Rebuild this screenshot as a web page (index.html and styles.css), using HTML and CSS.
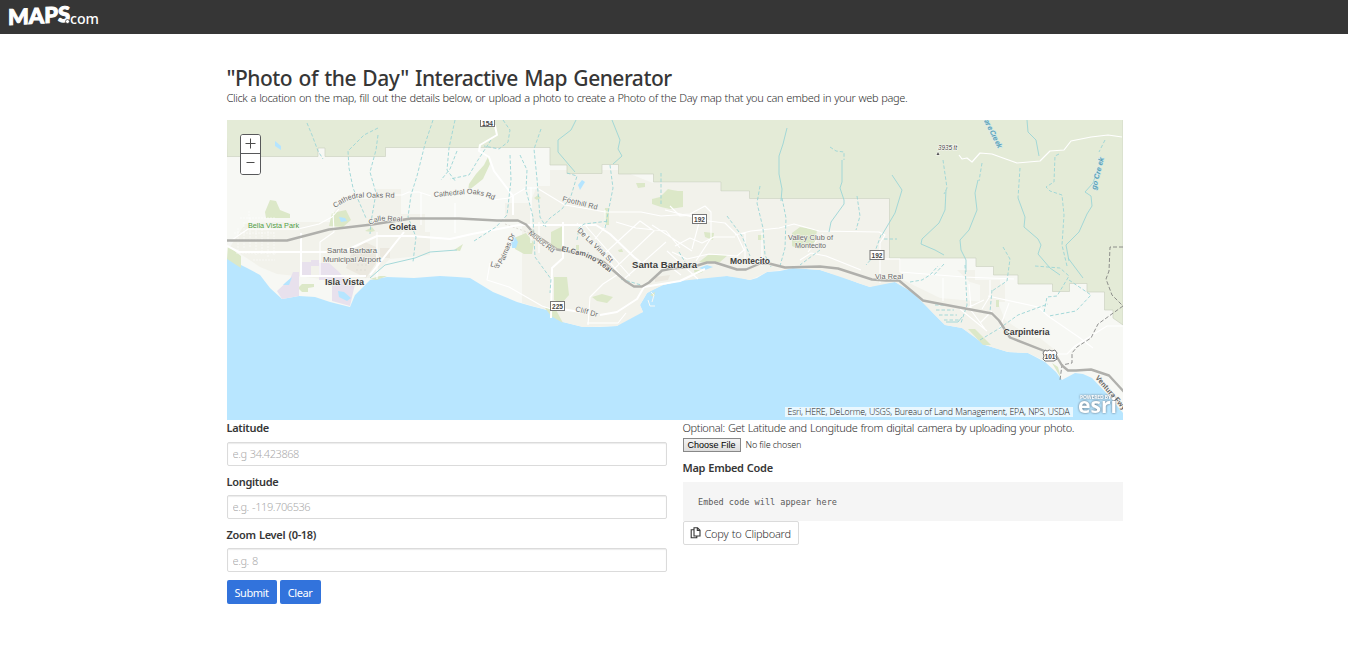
FILE: index.html
```
<!DOCTYPE html>
<html lang="en">
<head>
<meta charset="utf-8">
<title>Photo of the Day Map Generator</title>
<link rel="stylesheet" href="styles.css">
</head>
<body>
<header class="navbar">
  <svg class="logo" width="96" height="24" viewBox="0 0 96 24" aria-label="Maps.com">
    <g fill="#fff" transform="skewY(-3)">
      <text class="logo-main" x="0" y="21" textLength="62" lengthAdjust="spacingAndGlyphs">MAPS</text>
    </g>
    <text class="logo-com" x="62" y="19.5" textLength="29" lengthAdjust="spacingAndGlyphs">com</text>
    <circle cx="59.500" cy="17.5" r="2" fill="#fff" stroke="#363636" stroke-width=".7"/>
  </svg>
</header>
<main class="container">
  <h1 class="title">"Photo of the Day" Interactive Map Generator</h1>
  <p class="intro">Click a location on the map, fill out the details below, or upload a photo to create a Photo of the Day map that you can embed in your web page.</p>
  <section class="map">
    <svg class="map-canvas" width="896" height="300" viewBox="227 120 896 300">
      <defs>
        <path id="p-oaks1" d="M335 208 Q349 198 361 197.500 L400 198"/>
        <path id="p-oaks2" d="M434 197 L466 194 Q480 193 498 202"/>
        <path id="p-real" d="M370 225 Q376 221 384 220.500 L408 222"/>
        <path id="p-camino" d="M561 251 L583 256 Q598 262 615 277"/>
        <path id="p-palmas" d="M490 266 L498 268 Q505 262 507 254 L518 228"/>
      </defs>
      <rect x="227" y="120" width="896" height="300" fill="#b8e6ff"/>
      <path fill="#f7f8f4" d="M227 120H1123V413L1108 395 1092 378 1083 374 1075 373 1062 380 1056 372 1045 362 1028 353 1008 352 985 345 975 337 962 328 945 325 932 312 922 301 912 292 895 282 883 283 878 283 870 287 858 283 843 277 820 270 806 269 793 268 780 271 767 272 757 278 750 280 738 277 727 276 700 277 680 281 663 285 652 290 647 293 640 305 643 312 636 314 627 318 617 326 600 327 583 327 563 322 547 310 531 306 517 302 493 292 470 278 457 277 440 276 414 278 387 277 370 280 355 295 350 307 330 302 315 297 299 296 282 299 270 288 260 275 247 268 227 258Z"/>
      <path fill="#f2f2eb" d="M550 170H620L653 183H721V192H749V199H889V259H901V279L940 298 985 302 993 290 1005 320 1050 350 1045 361 1028 353 1008 352 985 345 962 328 945 325 912 292 895 282 870 287 820 270 793 268 767 272 750 280 727 276 680 281 663 285 647 293 640 305 643 312 617 326 583 327 563 322 547 310 522 303 522 222 505 222 505 203 530 203 537 186 550 186Z"/>
      <path fill="#f2f2eb" d="M335 210L347 199 376 199 376 189 401 189V214H425V232H430V255L390 259 370 278 330 280 305 277 277 274 260 267 230 247 245 224 270 222H330ZM957 270H975V280H1000V296H990V288L970 282ZM980 284H1005V302H980ZM1022 336L1040 338 1055 350 1045 353Z"/>
      <path fill="#e4ebd7" stroke="#cdd2c1" stroke-width=".7" d="M227 156.500H318V148H325V156.500H385.500V147.500H550V165H567V173.500H602V164.500H618.500V174H653.500V182H721V191H749.500V198.500H889.500V258H976V266.500H993.500V275H1018V284H1052.500V291.500H1069.500V283.500H1087V292H1104.500V310H1113V318L1123 325V119H226Z"/>
      <g fill="#dce8c8">
        <path d="M265 212l5-12 6 1 4 9 10 4v4h-24ZM228 246l13 10v12l-14-9ZM332 213l14-3 5 10-8 7-14-1ZM365 231l7-4 3 4-4 1ZM469 184l7-10 8-9 4-8 2 7-7 15-15 12ZM454 250l9-6-3 7ZM514 238l12-5 8 10-2 11-8 0-9-5ZM551 232l12-6v24h-12ZM554 277h13l2 18-7 8-8-3ZM545 308h10l8 15-12-7ZM592 297l10-3 11 3-6 6-10-2ZM534 198l4-3 3 3-4 2ZM605 208h4v17h-5ZM652 199l8-2 4-4 4-4 4 1 6 1 5 0v16l-13 2-9-2-9-3ZM636 183h9v4l-7 1ZM370 279l10-3 7 0-10 4ZM302 284h12v3l-6 1v4h-6l-4-4ZM650 295l5-3-1 5ZM576 245h3v6h-3ZM618 250l4-1 1 3-4 0Z"/>
        <path d="M792 233l8-6 17 3-2 14-16 5-7-3ZM704 232l10 1-1 7-8-3ZM699 262l9-7h20l-8 7-15 1ZM758 235h5v5h-5ZM968 329h7l16 16h-8ZM996 300h3v7h-3ZM1052 363l6 4 3 11ZM694 270h9v2l-8 3Z"/>
      </g>
      <path fill="#e8e1ed" d="M293 272h6v24l-17 3-5-8 13-12ZM311 260h8v6h-8v10h-10v-14h10ZM319 263l10 0 10 9 7 8 9 4-5 22-18-5V280h-13Z"/>
      <path fill="#ebe8df" d="M352 251l13-9 11 5v16l-10 15-20-10ZM655 277l15-2-2 5-13 2ZM380 248h10v10h-10Z"/>
      <g fill="none" stroke="#dfddd6" stroke-width="1" stroke-dasharray="2 2"><path d="M350 252l16 12M354 248l18 15M356 270l10 0M357 265l10 0M505 224l30 11"/></g>
      <g fill="#b5e5ff">
        <path d="M275 141l6 5v4l-6-4ZM339 217l6 1 2 3-6 1ZM285 283l7-6-3 8-6 0ZM338 291l6 1 7 6-4 3-8-4ZM511 240l4-3 3 5-2 6h-4ZM578 185l4-5 3 2-5 8ZM699 268l8-3 6 2-8 3Z"/>
      </g>
      <path d="M652 302l2-7-3-3M648 300l2 6 5 0" stroke="#f7f8f4" fill="none"/>
      <g fill="none" stroke="#fff" stroke-width=".8" opacity=".7" stroke-dasharray="2 1"><path d="M231 240h45M234 233h40M238 228v22M244 222v26M250 218v30M256 227v28M262 226v28M268 222v35M274 232v24M236 253h40M249 211v12M240 218h35M253 260h22"/></g>
      <g class="road">
        <path class="road-main" d="M227 246l12 6h93l15-2 30-14 35 0 38 3 22-5 47-9h77l14 9 24 23 10 8M480 120l15 6 2 9-17 10-1 6 10 6 5 14 19 25v19M563 222v36l-11 10-1 50M556 308l18 3 9 1M600 315l17-3 20-13 7-12 36-6 25-12M370 275l34-43M301 233v43h65"/>
        <path class="road-thin" d="M229 242l19-13h50l21-5 13-7 7-8M320 276v-34l14-10-1-20M377 232v47M394 195h8l7-3h10l12 4M421 193v32M455 203v30M493 200l16-2 17-10h11l28 17 24 4 16 3h36l20 4 29-2 15-8 6 6v26l-15 23M531 187v56M539 222v31M605 210v17l-10 12M616 222l20 6 30 3 14 17M577 223l51 61M585 225l45 51M602 256l38-35 14 10-40 38M623 280l43-38M652 225l40 26M665 210l35 9-8 30M490 263l-3 17 22 7 33 19 9 3M588 325l2-28 13-13 14-9M587 323l31 0 8-10"/>
        <path class="road-thin" d="M670 206l10 10 15-1M700 220l25 3 12 12 7 15-7 6-28-2-22 5-15-7M675 246l15-8 12 5 12-6h21M735 235l16-4 28-3 15-4 25 7 60 1 6 3-5 8v40M762 233v33M745 232v28M808 252l8-11 7-7M800 260l11-7 15 3 35 14M882 259h18M900 259v13l64 5 50 2M943 278v23M969 284l2 24M990 280v16l-8 13M988 296l50 11 10 9 32 22 13 10M1009 303l-10 27M960 309l27 22M970 309l15 20M1057 354h10l8-8 32-20h16M667 251l31 28M664 262l17 13M965 309l19-9M980 323l12-12"/>
        <path class="road-hill" d="M959 155l3 4 5-1 5 4 8-9 12 1 11 4 14 5 23-2 10-10 14-1 7-9 20-4 17-2 14 2"/>
      </g>
      <g class="stream-dash">
        <path d="M307 123l5 12 6 16 5 8M378 128l-14 7-9 9-7 7 1 17 4 20 7 16 6 14M433 120l-8 24-8 32-6 19-3 22 8 20-3 25M378 135l-2 15-6 22 6 21-5 29-1 12M455 120l-6 28-2 22 9 12M457 151l-7 18-9 11M503 120l7 10-2 12-9 7-15-3M491 140l-13 20-9 15-19 4M541 129l-7 20 3 30 3 38 6 10M510 155l1 25-4 35-11 12-22 14M520 155l7 15-1 20 7 27 2 40 16 22-1 14M567 173l10 3-6 20-9 13-12 9-7 8M577 240l2-12 5-4 25-3M605 228l8-40-3-23M661 173v32M621 279l20 6M679 252l6 10"/>
        <path d="M760 186l-3 17 6 25 2 27 6 12M782 198l4 20-1 30-5 18M727 216l15 20 8 20M830 147l6 4 8 1v8M857 196l3 20-4 14M881 235l-8 22-7 8M820 250l-20 15M884 239h13"/>
        <path d="M910 282l12-2 8-5 8-9M943 160l4 28-3 6M982 163l-3 18M1020 168l-2 30M1059 154l-4 2-1 26-8 5 4 4 12 4 2 20-2 30 5 21M1003 247l7 12-3 22-15 10M944 264l-11 12M965 265l2 40-6 18M992 290l-2 22M980 340l20-12 18-13 30-11M1035 266l25 2 9 8-12 20-10 1-3 15M1069 280l22 15-15 16-27 5M1105 140l-6 12M935 305h10M936 310h18M939 315h18M944 320h15"/>
      </g>
      <g class="stream">
        <path d="M576 120l-5 10-13 10v12l17 20M612 120l8 20-2 9 4 7-9 8M787 128l-4 16-4 12 0 18 3 15-1 12M842 160v22l-2 6 4 12v4l-13 18-2 10M892 175l10 15-7 23-13 22M946 190l-1 20-6 13-17 16-1 5 14 6 9 5M978 180l-3 13 2 17-8 20-9 10 1 10 5 10v12M1018 198l7 19-1 10 14 12 3 6-3 9 12 14 10 7M1069 261l-3-16 13-13 8-18 5-8-1-10-6-4 8-9 3-9M1068 258l15 20M1027 120l1 12 8 8 3 16M370 278l15-13 30-7 15-6 27-2M946 322l12 0 4-5"/>
      </g>
      <path class="boundary" d="M1123 247h-13l-1 24-3 8 6 16 11 11M1123 306l-25 18-7 14-14 9-5 6v10l-10 2-2 15"/>
      <path class="highway" d="M227 240.500h60l42-11 43-5 39-6h48l38 2h21l8 4 9 10 22 15 28 5 18 7 23 20 8 5h8l7-4 13-12 10-2 22-2 13-4h8l22 7h9l14-6h9l16 4 35-1 18 2 34 11 14 1h13l24 20 10 2 59 11 7 7 11 17 46 18 6 10 6 5h8l15-1 18 6 11 12 19 20"/>
      <g class="label">
        <text class="park" x="248" y="228" textLength="51" lengthAdjust="spacingAndGlyphs">Bella Vista Park</text>
        <text x="327" y="253" textLength="50" lengthAdjust="spacingAndGlyphs">Santa Barbara</text>
        <text x="323" y="261.500" textLength="58" lengthAdjust="spacingAndGlyphs">Municipal Airport</text>
        <text x="788" y="239.500" textLength="45" lengthAdjust="spacingAndGlyphs">Valley Club of</text>
        <text x="795" y="247.500" textLength="31" lengthAdjust="spacingAndGlyphs">Montecito</text>
        <text><textPath href="#p-oaks1" textLength="62">Cathedral Oaks Rd</textPath></text>
        <text><textPath href="#p-oaks2" textLength="61">Cathedral Oaks Rd</textPath></text>
        <text><textPath href="#p-real" textLength="33">Calle Real</textPath></text>
        <text class="town-road"><textPath href="#p-camino" textLength="54">El Camino Real</textPath></text>
        <text><textPath href="#p-palmas" textLength="46">Las Palmas Dr</textPath></text>
        <text transform="translate(562 201) rotate(14)" textLength="36">Foothill Rd</text>
        <text transform="translate(577 231) rotate(44)" textLength="46">De La Vina St</text>
        <text transform="translate(528 234) rotate(38)" textLength="31">Modoc Rd</text>
        <text transform="translate(575 311) rotate(15)" textLength="23">Cliff Dr</text>
        <text x="875" y="279" textLength="28">Via Real</text>
        <text class="town" x="389" y="230" textLength="27" lengthAdjust="spacingAndGlyphs">Goleta</text>
        <text class="town" x="325" y="284.500" textLength="39" lengthAdjust="spacingAndGlyphs">Isla Vista</text>
        <text class="town" x="632" y="268" textLength="65" lengthAdjust="spacingAndGlyphs">Santa Barbara</text>
        <text class="town" x="730" y="263.500" textLength="40" lengthAdjust="spacingAndGlyphs">Montecito</text>
        <text class="town" x="1003.500" y="334.500" textLength="46" lengthAdjust="spacingAndGlyphs">Carpinteria</text>
        <text class="town-road" transform="translate(1095 378) rotate(49)" textLength="43">Ventura Fwy</text>
        <text class="peak" x="938" y="150" textLength="19">3935 ft</text>
        <path fill="#555" d="M936.500 155l1.500-3 1.500 3Z"/>
        <text class="creek" transform="translate(984 121) rotate(63)" textLength="31">ar e Cre ek</text>
        <text class="creek" transform="translate(1096 190) rotate(-76)" textLength="33">go Cre ek</text>
      </g>
      <g class="shield">
        <rect x="480.500" y="116.500" width="14" height="10"/><text x="487.500" y="125.500">154</text>
        <rect x="692.500" y="214.500" width="14" height="9"/><text x="699.500" y="221.500">192</text>
        <rect x="870" y="250.500" width="14" height="9"/><text x="877" y="257.500">192</text>
        <rect x="550.500" y="301.500" width="14" height="9"/><text x="557.500" y="308.500">225</text>
        <path d="M1045 350l2 1 2.500-1 2.500 1 3-1 2 3-1 3 1 3-3 2h-9l-2-2 1-3-1-3Z"/><text x="1050" y="358.500">101</text>
      </g>
      <g class="esri"><text class="powered" x="1080" y="398.500" textLength="31">POWERED BY</text><text x="1078" y="413" textLength="39" lengthAdjust="spacingAndGlyphs">esri</text></g>
    </svg>
    <div class="zoom-control"><button aria-label="Zoom in"><svg width="11" height="11"><path d="M5.500 .5v10M.5 5.500h10"/></svg></button><button aria-label="Zoom out"><svg width="11" height="11"><path d="M1.500 5.500h8"/></svg></button></div>
    <div class="attribution">Esri, HERE, DeLorme, USGS, Bureau of Land Management, EPA, NPS, USDA</div>
  </section>
  <div class="columns">
    <form class="column">
      <label class="label-text" for="lat">Latitude</label>
      <input class="input" id="lat" placeholder="e.g 34.423868">
      <label class="label-text" for="lon">Longitude</label>
      <input class="input" id="lon" placeholder="e.g. -119.706536">
      <label class="label-text" for="zoom">Zoom Level (0-18)</label>
      <input class="input" id="zoom" placeholder="e.g. 8">
      <div class="buttons"><button type="button" class="button submit">Submit</button><button type="button" class="button clear">Clear</button></div>
    </form>
    <section class="column">
      <p class="optional">Optional: Get Latitude and Longitude from digital camera by uploading your photo.</p>
      <div class="file"><button class="choose">Choose File</button><span class="no-file">No file chosen</span></div>
      <p class="label-text embed-label">Map Embed Code</p>
      <pre class="embed">Embed code will appear here</pre>
      <button class="copy"><svg width="11" height="12" viewBox="0 0 11 12"><path d="M4 .8h3.500L10 3.300v5.700H4ZM7.300.8v2.700H10M4 2.800H1.200v8h5.600V9"/></svg><span>Copy to Clipboard</span></button>
    </section>
  </div>
</main>
</body>
</html>
```
FILE: styles.css
```
* { box-sizing: border-box; }
body { margin: 0; background: #fff; color: #4a4a4a; font: 11px/16.5px "Noto Sans", "Open Sans", sans-serif; }
button, input { font-family: inherit; }
h1, p, pre { margin: 0; }
.navbar { height: 34px; padding: 4px 8px; background: #363636; }
.logo { display: block; overflow: visible; }
.logo-main { font: 900 21.5px Lato, sans-serif; stroke: #fff; stroke-width: 1px; }
.logo-com { font: 500 15px "Noto Sans", sans-serif; fill: #fff; }
.container { width: 896px; margin: 0 auto; padding-top: 33px; position: relative; left: .5px; }
.title { height: 23px; font-size: 21px; line-height: 22px; font-weight: 500; letter-spacing: -.5px; word-spacing: 1.4px; color: #363636; white-space: nowrap; }
.intro { height: 30px; line-height: 16px; font-weight: 300; letter-spacing: -.36px; word-spacing: .64px; color: #303030; white-space: nowrap; }
.map { position: relative; height: 300px; overflow: hidden; }
.map-canvas { display: block; }
.road { fill: none; stroke: #fff; stroke-linejoin: round; }
.road-main { stroke-width: 2; }
.road-thin { stroke-width: 1.1; }
.road-hill { stroke-width: 1.2; }
.stream, .stream-dash { fill: none; stroke: #9bd5d6; stroke-width: .9; }
.stream-dash { stroke-dasharray: 3.5 2; }
.boundary { fill: none; stroke: #777; stroke-width: .8; stroke-dasharray: 4 2; }
.highway { fill: none; stroke: #b0b0ac; stroke-width: 2.4; stroke-linejoin: round; }
.label { font: 7.3px "Liberation Sans", Arial, sans-serif; fill: #686868; stroke: #f7f7f2; stroke-width: 1.2px; paint-order: stroke; }
.town { font-size: 8.3px; font-weight: 700; fill: #3c3c3c; }
.town-road { font-weight: 700; fill: #666; }
.park { fill: #4f9b43; }
.peak { font-style: italic; font-size: 6.5px; fill: #444; }
.creek { font-style: italic; font-weight: 700; fill: #5b9fb4; stroke: #d0e9ec; }
.shield { fill: #fff; stroke: #777; stroke-width: 1; }
.shield text { font: 700 6.5px "Liberation Sans", Arial, sans-serif; fill: #444; stroke: none; text-anchor: middle; }
.esri { fill: #fff; font: 700 21px "Open Sans", sans-serif; filter: drop-shadow(0 0 1px #567); }
.powered { font-size: 5px; }
.zoom-control { position: absolute; left: 13px; top: 14px; width: 21px; height: 41px; border: 1px solid #57585a; border-radius: 3px; overflow: hidden; background: #fff; }
.zoom-control button { display: flex; width: 19px; height: 18px; padding: 0 0 2px; border: 0; align-items: center; justify-content: center; background: #fff; }
.zoom-control button + button { height: 21px; padding-bottom: 3px; border-top: 1px solid #57585a; }
.zoom-control path { stroke: #4c4c4c; stroke-width: 1; }
.attribution { position: absolute; left: 558px; bottom: 3px; width: 288px; height: 10px; padding-left: 3px; background: rgba(255,255,255,.7); color: #222; font: 300 8.800px/10px "Open Sans", sans-serif; letter-spacing: -.21px; word-spacing: .3px; white-space: nowrap; }
.columns { display: grid; grid-template-columns: 440px 440px; gap: 16px; }
.column { display: flex; flex-direction: column; min-width: 0; }
.label-text { height: 22px; line-height: 17px; font-size: 11px; font-weight: 600; letter-spacing: -.3px; word-spacing: .6px; color: #363636; }
.column > .label-text:first-child { line-height: 16px; }
.input { width: 440px; height: 24px; margin-bottom: 7px; padding: 0 5px 1px; border: 1px solid #dbdbdb; border-radius: 2px; box-shadow: inset 0 1px 1px rgba(10,10,10,.08); font-size: 11px; font-weight: 300; letter-spacing: -.42px; word-spacing: .8px; }
#zoom { margin-bottom: 8px; padding-bottom: 0; }
.input::placeholder { color: #aaa; }
.buttons { display: flex; gap: 3px; }
.button { height: 24px; padding: 1px 0 0; border: 0; border-radius: 2px; background: #3273dc; color: #fff; font-size: 11px; letter-spacing: -.42px; }
.submit { width: 50px; }
.clear { width: 41px; }
.optional { height: 18px; line-height: 16px; font-weight: 300; letter-spacing: -.37px; word-spacing: .7px; color: #303030; white-space: nowrap; }
.file { display: flex; height: 22px; align-items: flex-start; gap: 5px; }
.choose { width: 58px; height: 14px; padding: 0; border: 1px solid #888; border-radius: 0; background: linear-gradient(#f4f4f4,#ddd); font: 9px/12px "Liberation Sans", Arial, sans-serif; color: #000; }
.no-file { font-size: 9px; line-height: 14px; font-weight: 300; letter-spacing: -.16px; color: #222; }
.embed-label { height: 22px; line-height: 16px; }
.embed { height: 39px; padding: 12px 15.5px; background: #f5f5f5; font: 8.550px/17px "DejaVu Sans Mono", monospace; color: #5a5a5a; }
.copy { display: flex; align-items: center; gap: 4px; width: 116px; height: 24px; padding: 0 6px; border: 1px solid #dbdbdb; border-radius: 2px; background: #fff; color: #303030; font-size: 11px; font-weight: 300; letter-spacing: -.26px; word-spacing: .8px; white-space: nowrap; }
.copy svg { flex: none; }
.copy path { fill: none; stroke: #363636; stroke-width: 1.100; }
```
